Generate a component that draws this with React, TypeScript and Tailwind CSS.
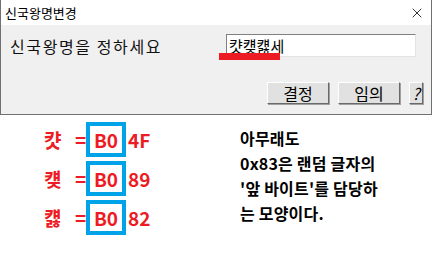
import { X } from "lucide-react";

const rows = [
  { ch: "캿", tail: "4F" },
  { ch: "컞", tail: "89" },
  { ch: "컗", tail: "82" },
];

function WinButton({ children, className = "" }: { children: React.ReactNode; className?: string }) {
  return (
    <div
      className={`h-[22px] flex items-center justify-center bg-[#e1e1e1] border border-t-white border-l-white border-r-[#696969] border-b-[#696969] shadow-[1px_1px_0_#a0a0a0] text-[16px] text-black ${className}`}
    >
      {children}
    </div>
  );
}

export default function App() {
  return (
    <div
      className="w-[434px] h-[253px] bg-white overflow-hidden"
      style={{ fontFamily: '"Noto Sans CJK KR", "Noto Sans", sans-serif' }}
    >
      {/* dialog */}
      <div className="w-[432px] h-[115px] border-l border-r border-b border-[#707070] flex flex-col">
        <div className="h-[25px] bg-white flex items-center justify-between pl-[4px] pr-[6px]">
          <span className="text-[13px] text-black leading-none">신국왕명변경</span>
          <X size={16} strokeWidth={1.2} className="text-black" />
        </div>
        <div className="flex-1 bg-[#f0f0f0] relative flex flex-col">
          <div className="flex items-center mt-[9px] pl-[9px]">
            <span className="text-[16px] text-[#111] w-[216px] leading-none tracking-[1.6px]">신국왕명을 정하세요</span>
            <div className="w-[190px] h-[23px] bg-white border border-t-[#808080] border-l-[#808080] border-r-[#e3e3e3] border-b-[#e3e3e3] flex items-center pl-[2px] text-[15px] leading-none text-black">
              캿컞컗세
            </div>
          </div>
          <div className="absolute left-[218px] top-[28px] w-[61px] h-[7px] bg-[#ed1c24]" />
          <div className="flex justify-end items-center gap-[9px] mt-auto mb-[10px] pr-[8px]">
            <WinButton className="w-[62px]">결정</WinButton>
            <WinButton className="w-[62px]">임의</WinButton>
            <WinButton className="w-[14px] text-[14px] italic">?</WinButton>
          </div>
        </div>
      </div>

      {/* annotations */}
      <div className="flex pt-[7px]">
        <div className="flex flex-col gap-[4px] pl-[44px] w-[240px]">
          {rows.map((r) => (
            <div key={r.tail} className="flex items-center h-[35px] text-[19px] font-bold text-[#ed1c24] leading-none">
              <span className="w-[31px]">{r.ch}</span>
              <span className="w-[11px]">=</span>
              <span className="w-[40px] h-[35px] border-[4px] border-[#00a2e8] flex items-center justify-center">B0</span>
              <span className="pl-[2px]">{r.tail}</span>
            </div>
          ))}
        </div>
        <div className="pt-[4px] text-[16px] font-bold text-black leading-[25px] tracking-[0.2px]">
          <div>아무래도</div>
          <div>0x83은 랜덤 글자의</div>
          <div>'앞 바이트'를 담당하</div>
          <div>는 모양이다.</div>
        </div>
      </div>
    </div>
  );
}
